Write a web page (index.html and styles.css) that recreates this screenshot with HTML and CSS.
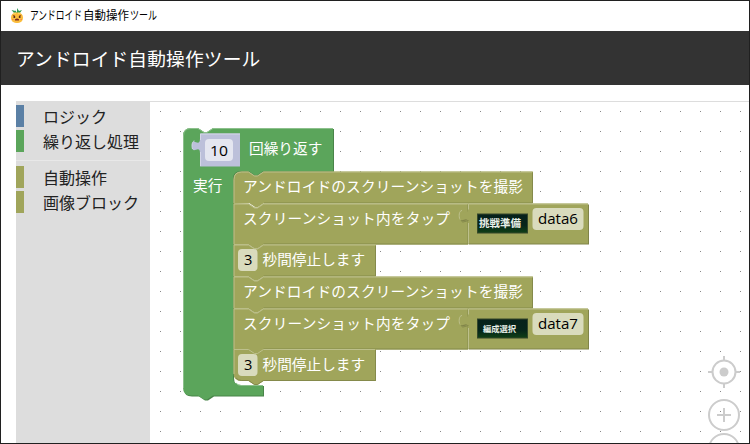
FILE: index.html
```html
<!DOCTYPE html>
<html lang="ja">
<head>
<meta charset="utf-8">
<title>アンドロイド自動操作ツール</title>
<link rel="stylesheet" href="styles.css">
</head>
<body>
<div class="window">
  <div class="titlebar">
    <svg class="app-icon" width="14" height="16" viewBox="0 0 14 16">
      <path d="M7 5 5 1.5 5.5 3 1.5 2 4.5 5.5h5L12 2 9 3 7 0z" fill="#2d9a55"/>
      <rect x="1" y="4.5" width="12" height="10.5" rx="5" fill="#fbbd3d"/>
      <path d="M3 5.2h3M8 5.2h3" stroke="#ffdc78"/>
      <path d="M2.8 7.2 5 8M11.2 7.2 9 8" stroke="#a65b16"/>
      <circle cx="4.3" cy="9" r="1" fill="#4b2418"/><circle cx="9.7" cy="9" r="1" fill="#4b2418"/>
      <path d="M5 11.3q2-1.5 4 0v1.2H5z" fill="#7d2c1e"/>
      <path d="M2 11.5h1.5M10.5 11.5H12" stroke="#f38b43"/>
    </svg>
    <svg class="app-name" width="180" height="20">
      <text x="0" y="14" textLength="52" lengthAdjust="spacingAndGlyphs">アンドロイド</text>
      <text x="53" y="14" textLength="46" lengthAdjust="spacingAndGlyphs">自動操作</text>
      <text x="100" y="14" textLength="27" lengthAdjust="spacingAndGlyphs">ツール</text>
    </svg>
  </div>
  <header class="header">アンドロイド自動操作ツール</header>
  <main class="editor">
    <nav class="toolbox">
      <div class="category logic">ロジック</div>
      <div class="category loops">繰り返し処理</div>
      <div class="separator"></div>
      <div class="category auto">自動操作</div>
      <div class="category auto">画像ブロック</div>
    </nav>
    <svg class="workspace" width="599" height="342" viewBox="150 101 599 342">
      <defs>
        <pattern id="grid" x="160" y="111" width="20" height="20" patternUnits="userSpaceOnUse">
          <rect width="1" height="1" fill="#888"/>
        </pattern>
        <linearGradient id="photo" x1="0" y1="0" x2="0" y2="1">
          <stop offset="0" stop-color="#06211b"/><stop offset=".6" stop-color="#06251a"/><stop offset="1" stop-color="#104015"/>
        </linearGradient>
        <path id="shot" d="M0 0H15l6 4h3l6-4H299.500V32H30l-6 4h-3l-6-4H0z"/>
        <path id="tap" d="M0 0H15l6 4h3l6-4H235V41H30l-6 4h-3l-6-4H0z"/>
        <path id="wait" d="M0 0H15l6 4h3l6-4H142.500V32H30l-6 4h-3l-6-4H0z"/>
        <g id="image-value">
          <path class="dark" d="M1 1H121V41H1V21c0-10-8 2.500-8-7.500S1 16 1 6z"/>
          <path class="olive" d="M0 0H120V40H0V20c0-10-8 2.500-8-7.500S0 15 0 5z"/>
          <path class="olive-light" d="M.5 40V19.500M.5 6V.5H120M-8 16c-1.500-3-1-9 2-9"/>
          <path class="olive-shade" d="M-7 16.500q1 3.500 4 1.500l3.500-1"/>
          <rect class="photo" x="9.500" y="10.500" width="50" height="19"/>
          <rect class="field" x="64.500" y="4.500" width="51" height="22" rx="4"/>
        </g>
      </defs>
      <rect x="150" y="101" width="599" height="342" fill="url(#grid)"/>
      <path d="M150 101.500H749" stroke="#ddd"/>

      <g class="controls">
        <circle cx="724" cy="372" r="11.500"/><path d="M724 356v5M724 383v5M708 372h5M735 372h5"/>
        <circle class="target" cx="724" cy="372" r="4.500"/>
        <circle cx="724" cy="415" r="15"/><path d="M717 415h14M724 408v14"/>
        <circle cx="724" cy="449" r="15"/><path d="M717 449h14"/>
      </g>

      <path class="green-dark" d="M184 137q0-8 8-8h7l6 4h3l6-4H334v43H263.500l-6 4h-3l-6-4H242q-8 0-8 8V378q0 8 8 8h22v10.500H214l-6 4h-3l-6-4h-7q-8 0-8-8z"/>
      <path class="green" d="M183 136q0-8 8-8h7l6 4h3l6-4H333v43H263.500l-6 4h-3l-6-4H241q-8 0-8 8V377q0 8 8 8h22v10.500H213l-6 4h-3l-6-4h-7q-8 0-8-8z"/>
      <path class="green-light" d="M183.500 388V136q0-7.500 7.500-7.500h7l6 4h3l6-4H333M236 383q2 2.500 5 2.500h22"/>
      <path class="number" d="M200 133.500H240V166.500H200V153.500c0-10-8 2.500-8-7.500S200 148.500 200 138.500z"/>
      <path class="number-light" d="M200.500 166V152M200.500 140V134H240M192.500 149c-1-3-.5-8 2-8"/>
      <rect class="number-field" x="205" y="139" width="28" height="22" rx="4"/>
      <text class="dark-text" x="210" y="155.500" textLength="18" lengthAdjust="spacingAndGlyphs">10</text>
      <text x="249" y="154">回繰り返す</text>
      <text x="193" y="191">実行</text>

      <path class="olive" d="M233.500 204V179.500q0-8 8-8h7l6 4h3l6-4H533V203H264l-6 4h-3l-6-4z"/>
      <path class="olive-light" d="M234 203V179.500q0-7.500 7.500-7.500h7l6 4h3l6-4H532"/>
      <path class="olive-shade" d="M532.500 172.500V203H264"/>
      <g transform="translate(233.500 203.500)"><use href="#tap" class="olive"/><path class="olive-shade" d="M234.500 1V40.500H30"/><path class="olive-light" d="M.5 41V.5H15l6 4h3l6-4H234"/></g>
      <g transform="translate(233.500 244.500)"><use href="#wait" class="olive"/><path class="olive-shade" d="M142 1V31.500H30"/><path class="olive-light" d="M.5 32V.5H15l6 4h3l6-4H142"/></g>
      <g transform="translate(233.500 276.500)"><use href="#shot" class="olive"/><path class="olive-shade" d="M299 1V31.500H30"/><path class="olive-light" d="M.5 32V.5H15l6 4h3l6-4H299"/></g>
      <g transform="translate(233.500 308.500)"><use href="#tap" class="olive"/><path class="olive-shade" d="M234.500 1V40.500H30"/><path class="olive-light" d="M.5 41V.5H15l6 4h3l6-4H234"/></g>
      <path class="last-fill" d="M233.500 349V373q0 8 8 8h7l6 4h3l6-4H376V349z"/>
      <path class="olive-shade" d="M236 378q2 2.500 5.500 2.500h7l6 4h3l6-4H375.500V350"/>
      <path class="olive-light" d="M234 374V349.500h14.500l6 4h3l6-4H375"/>

      <use href="#image-value" x="468" y="203.500"/>
      <use href="#image-value" x="468" y="308.500"/>
      <text x="243" y="192" textLength="280">アンドロイドのスクリーンショットを撮影</text>
      <text x="243" y="224" textLength="207">スクリーンショット内をタップ</text>
      <text x="243" y="297" textLength="280">アンドロイドのスクリーンショットを撮影</text>
      <text x="243" y="329" textLength="207">スクリーンショット内をタップ</text>
      <text class="photo-text" x="479" y="227" textLength="42">挑戦準備</text>
      <text class="photo-text small" x="483" y="331.500" textLength="33">編成選択</text>
      <text class="dark-text" x="538" y="224" textLength="40" lengthAdjust="spacingAndGlyphs">data6</text>
      <text class="dark-text" x="538" y="329" textLength="40" lengthAdjust="spacingAndGlyphs">data7</text>
      <rect class="field" x="238" y="249" width="19.500" height="22" rx="4"/>
      <rect class="field" x="238" y="354" width="19.500" height="22" rx="4"/>
      <text class="dark-text" x="244" y="265">3</text>
      <text class="dark-text" x="244" y="370">3</text>
      <text x="262.500" y="265">秒間停止します</text>
      <text x="262.500" y="370">秒間停止します</text>
    </svg>
  </main>
</div>
</body>
</html>
```
FILE: styles.css
```css
* { box-sizing: border-box; }
body { margin: 0; background: #fff; font-family: "Noto Sans CJK JP", sans-serif; font-weight: 400; }
.window { width: 750px; height: 444px; border: 1px solid #202020; overflow: hidden; display: flex; flex-direction: column; }
.titlebar { height: 30px; flex: none; display: flex; align-items: center; padding-left: 9px; gap: 6px; }
.app-name { font-size: 12px; overflow: visible; }
.header { height: 54px; flex: none; padding-left: 15px; background: #333; color: #fff; font-size: 18.72px; letter-spacing: .15px; line-height: 53px; }
.editor { display: flex; padding: 16px 0 0 15px; height: 358px; flex: none; }
.toolbox { width: 134px; height: 342px; flex: none; background: #ddd; padding-top: 4px; color: #222; font-size: 16px; }
.category { height: 22px; margin-bottom: 3px; padding-left: 19px; border-left: 8px solid; line-height: 23px; white-space: nowrap; }
.category.logic { border-image: linear-gradient(#5b80a5, #5b80a5) 1; }
.category.loops { border-image: linear-gradient(#5ba55b, #5ba55b) 1; }
.category.auto { border-image: linear-gradient(#a0a55b, #a0a55b) 1; }
.separator { height: 1px; margin: 8px 0 5px; background: #e8e8e8; }
.workspace { display: block; flex: none; font-size: 14.667px; }
.workspace text { fill: #fff; }
.workspace .dark-text { fill: #000; font-family: "Open Sans", "Noto Sans", sans-serif; font-weight: 400; }
.workspace .photo-text { fill: #e7eee7; font-size: 10.5px; font-weight: 700; }
.workspace .small { font-size: 8.3px; }
.green { fill: #5ba55b; }
.green-dark { fill: #498449; }
.green-light { fill: none; stroke: #8cc08c; }
.olive, .last-fill { fill: #a0a55b; }
.dark { fill: #808449; }
.olive-light { fill: none; stroke: #bdc08c; }
.olive-shade { fill: none; stroke: #858a4b; }
.number { fill: #bcc0da; }
.number-light { fill: none; stroke: #d4d6e8; }
.number-field { fill: #e4e6f0; }
.field { fill: #d9dbbd; }
.photo { fill: url(#photo); stroke: #35472b; }
.controls { fill: none; stroke: #ccc; stroke-width: 2; }
.controls .target { fill: #ccc; stroke: none; }
```
